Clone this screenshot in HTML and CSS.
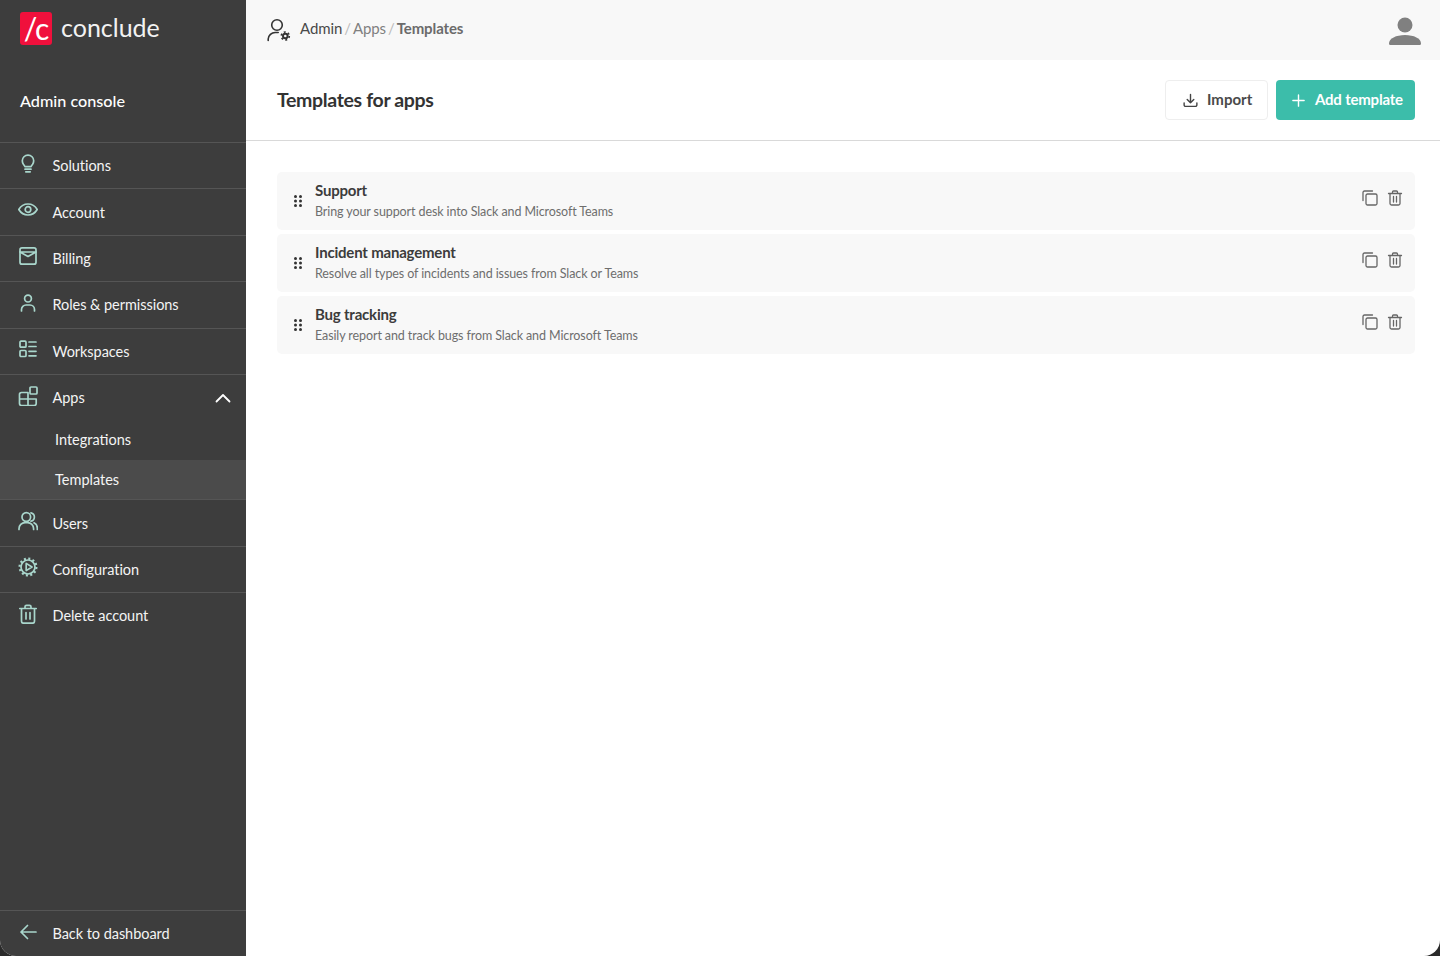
FILE: index.html
```html
<!DOCTYPE html>
<html>
<head>
    <title>Templates for apps</title>
    <link rel="stylesheet" href="styles.css">
</head>
<body>
    <div class="app">
        <aside class="sidebar">
            <div class="brand">
                <div class="logo">/c</div>
                <span class="brand-name">conclude</span>
            </div>
            <div class="console-title">Admin console</div>
            <nav class="nav">
                <a class="nav-item">
                    <svg class="nav-icon" viewBox="0 0 20 20"><path d="M6.900 12.600c-.3-1-.8-1.600-1.500-2.400A5.600 5.600 0 0 1 4.300 6.800 5.700 5.700 0 0 1 15.700 6.800c0 1.300-.4 2.400-1.100 3.400-.7.8-1.200 1.400-1.500 2.400zM7 15.200h6M7.800 17.800h4.400"/></svg>
                    <span>Solutions</span>
                </a>
                <a class="nav-item">
                    <svg class="nav-icon" viewBox="0 0 20 20"><path d="M.8 9.500C3 5.800 6.200 4 10 4s7 1.800 9.200 5.500C17 13.200 13.800 15 10 15S3 13.200.8 9.500z"/><circle cx="10" cy="9.500" r="2.800"/></svg>
                    <span>Account</span>
                </a>
                <a class="nav-item">
                    <svg class="nav-icon" viewBox="0 0 20 20"><rect x="2" y="1.800" width="16" height="16.400" rx="2"/><path d="M2 6h16M2 6l8 4.500L18 6"/></svg>
                    <span>Billing</span>
                </a>
                <a class="nav-item">
                    <svg class="nav-icon" viewBox="0 0 20 20"><circle cx="10" cy="5.600" r="3.400"/><path d="M3.500 18v-1.500a4.500 4.500 0 0 1 4.500-4.500h4a4.500 4.500 0 0 1 4.500 4.500V18"/></svg>
                    <span>Roles &amp; permissions</span>
                </a>
                <a class="nav-item">
                    <svg class="nav-icon" viewBox="0 0 20 20"><rect x="2" y="2.200" width="6" height="6" rx="1"/><rect x="2" y="11.500" width="6" height="6" rx="1"/><path d="M11 3h7M11 7.500h7M11 12.300h7M11 16.800h7"/></svg>
                    <span>Workspaces</span>
                </a>
                <a class="nav-item nav-open">
                    <svg class="nav-icon" viewBox="0 0 20 20"><path d="M1.500 8.500a2 2 0 0 1 2-2H10v13H3.500a2 2 0 0 1-2-2zM1.500 13H18M10 13h8.200v4.500a2 2 0 0 1-2 2H10"/><rect x="12" y="1" width="7" height="7" rx="1"/></svg>
                    <span>Apps</span>
                    <svg class="chevron" viewBox="0 0 16 10"><path d="M1.500 8.500L8 2l6.500 6.500"/></svg>
                </a>
                <div class="subnav">
                    <a class="sub-item">Integrations</a>
                    <a class="sub-item sub-active">Templates</a>
                </div>
                <a class="nav-item">
                    <svg class="nav-icon" viewBox="0 0 20 20"><circle cx="8.300" cy="6" r="4.300"/><path d="M1 18.500v-.8a6 6 0 0 1 6-6h2.600a6 6 0 0 1 6 6v.8M13 1.800a4.300 4.300 0 0 1 0 8.400M16 11.800a6 6 0 0 1 3.300 5.800v.9"/></svg>
                    <span>Users</span>
                </a>
                <a class="nav-item">
                    <svg class="nav-icon" viewBox="0 0 20 20"><circle cx="10" cy="10" r="7"/><path d="M8.200 6.400L14 10l-5.800 3.600z"/><circle class="gear-teeth" cx="10" cy="10" r="8.400"/></svg>
                    <span>Configuration</span>
                </a>
                <a class="nav-item">
                    <svg class="nav-icon" viewBox="0 0 20 20"><path d="M1.800 4.500h16.400M7 4.500V2.800a1.500 1.500 0 0 1 1.500-1.500h3A1.500 1.500 0 0 1 13 2.800v1.700M3.500 4.500v12.700a2 2 0 0 0 2 2h9a2 2 0 0 0 2-2V4.500M8 8.500v6.500M12 8.500v6.500"/></svg>
                    <span>Delete account</span>
                </a>
            </nav>
            <a class="nav-item back-link">
                <svg class="nav-icon" viewBox="0 0 20 20"><path d="M18 10H3M9.500 3.500L3 10l6.500 6.500"/></svg>
                <span>Back to dashboard</span>
            </a>
        </aside>

        <main class="main">
            <header class="topbar">
                <svg class="admin-icon" viewBox="0 0 24 24"><circle cx="10" cy="7" r="5.300"/><path d="M1.200 22.500v-1.500a7 7 0 0 1 7-6.500h3"/><circle cx="18.300" cy="18" r="2.300" class="gear"/><circle cx="18.300" cy="18" r="4" class="gear-teeth"/></svg>
                <div class="crumbs">
                    <span class="crumb-first">Admin</span>
                    <span class="crumb-sep">/</span>
                    <span class="crumb-mid">Apps</span>
                    <span class="crumb-sep">/</span>
                    <span class="crumb-last">Templates</span>
                </div>
                <svg class="avatar" viewBox="0 0 32 30"><circle cx="16" cy="9" r="7.500"/><path d="M0 27.500c0-5 7-8.500 16-8.500s16 3.500 16 8.500c0 1-.8 1.500-1.500 1.500H1.500C.8 29 0 28.500 0 27.500z"/></svg>
            </header>

            <div class="page-head">
                <h1>Templates for apps</h1>
                <div class="actions">
                    <button class="btn btn-light">
                        <svg class="btn-icon" viewBox="0 0 16 16"><path d="M8 1.500v9M4.500 7L8 10.500 11.500 7M1.200 10.500v2.300a1.500 1.500 0 0 0 1.500 1.500h10.600a1.500 1.500 0 0 0 1.500-1.500v-2.300"/></svg>
                        Import
                    </button>
                    <button class="btn btn-primary">
                        <svg class="btn-icon" viewBox="0 0 16 16"><path d="M8 2v12M2 8h12"/></svg>
                        Add template
                    </button>
                </div>
            </div>

            <section class="template-list">
                <div class="template-row">
                    <svg class="grip" viewBox="0 0 8 12"><circle cx="1.500" cy="1.500" r="1.500"/><circle cx="6.500" cy="1.500" r="1.500"/><circle cx="1.500" cy="6" r="1.500"/><circle cx="6.500" cy="6" r="1.500"/><circle cx="1.500" cy="10.500" r="1.500"/><circle cx="6.500" cy="10.500" r="1.500"/></svg>
                    <div class="template-text">
                        <div class="template-name">Support</div>
                        <div class="template-desc">Bring your support desk into Slack and Microsoft Teams</div>
                    </div>
                    <div class="row-icons">
                        <svg viewBox="0 0 16 16"><path d="M1 10.500V2.500A1.500 1.500 0 0 1 2.500 1h8"/><rect x="4" y="4" width="11" height="11" rx="1.500"/></svg>
                        <svg viewBox="0 0 16 16"><path d="M1.500 3.500h13M5.500 3.500V2a1 1 0 0 1 1-1h3a1 1 0 0 1 1 1v1.500M3 3.500v10a1.500 1.500 0 0 0 1.500 1.500h7a1.500 1.500 0 0 0 1.500-1.500v-10M6.500 6.500v5.500M9.500 6.500v5.500"/></svg>
                    </div>
                </div>
                <div class="template-row">
                    <svg class="grip" viewBox="0 0 8 12"><circle cx="1.500" cy="1.500" r="1.500"/><circle cx="6.500" cy="1.500" r="1.500"/><circle cx="1.500" cy="6" r="1.500"/><circle cx="6.500" cy="6" r="1.500"/><circle cx="1.500" cy="10.500" r="1.500"/><circle cx="6.500" cy="10.500" r="1.500"/></svg>
                    <div class="template-text">
                        <div class="template-name">Incident management</div>
                        <div class="template-desc">Resolve all types of incidents and issues from Slack or Teams</div>
                    </div>
                    <div class="row-icons">
                        <svg viewBox="0 0 16 16"><path d="M1 10.500V2.500A1.500 1.500 0 0 1 2.500 1h8"/><rect x="4" y="4" width="11" height="11" rx="1.500"/></svg>
                        <svg viewBox="0 0 16 16"><path d="M1.500 3.500h13M5.500 3.500V2a1 1 0 0 1 1-1h3a1 1 0 0 1 1 1v1.500M3 3.500v10a1.500 1.500 0 0 0 1.500 1.500h7a1.500 1.500 0 0 0 1.500-1.500v-10M6.500 6.500v5.500M9.500 6.500v5.500"/></svg>
                    </div>
                </div>
                <div class="template-row">
                    <svg class="grip" viewBox="0 0 8 12"><circle cx="1.500" cy="1.500" r="1.500"/><circle cx="6.500" cy="1.500" r="1.500"/><circle cx="1.500" cy="6" r="1.500"/><circle cx="6.500" cy="6" r="1.500"/><circle cx="1.500" cy="10.500" r="1.500"/><circle cx="6.500" cy="10.500" r="1.500"/></svg>
                    <div class="template-text">
                        <div class="template-name">Bug tracking</div>
                        <div class="template-desc">Easily report and track bugs from Slack and Microsoft Teams</div>
                    </div>
                    <div class="row-icons">
                        <svg viewBox="0 0 16 16"><path d="M1 10.500V2.500A1.500 1.500 0 0 1 2.500 1h8"/><rect x="4" y="4" width="11" height="11" rx="1.500"/></svg>
                        <svg viewBox="0 0 16 16"><path d="M1.500 3.500h13M5.500 3.500V2a1 1 0 0 1 1-1h3a1 1 0 0 1 1 1v1.500M3 3.500v10a1.500 1.500 0 0 0 1.500 1.500h7a1.500 1.500 0 0 0 1.500-1.500v-10M6.500 6.500v5.500M9.500 6.500v5.500"/></svg>
                    </div>
                </div>
            </section>
        </main>
    </div>
</body>
</html>
```

FILE: styles.css
```css
html, body { margin: 0; padding: 0; height: 100%; background: #2a2a2a; }
body { font-family: Lato, "Liberation Sans", sans-serif; font-size: 15px; color: #333; overflow: hidden; }
svg { fill: none; stroke-linecap: round; stroke-linejoin: round; }

.app { display: flex; height: 956px; background: #fff; border-radius: 0 0 16px 16px; overflow: hidden; }

/* sidebar */
.sidebar { width: 246px; flex: none; background: #3d3d3d; color: #fff; display: flex; flex-direction: column; }
.brand { display: flex; align-items: center; gap: 9px; height: 57px; padding-left: 20px; }
.logo { width: 32px; height: 33px; border-radius: 3px; background: #f0103c; color: #fff; font-size: 30px; line-height: 32px; text-align: center; letter-spacing: -1px; }
.brand-name { font-size: 25px; line-height: 30px; margin-bottom: 3px; color: #f2f2f2; }
.console-title { height: 85px; box-sizing: border-box; padding: 33px 0 0 20px; font-size: 16.200px; line-height: 22px; font-weight: 500; }
.nav { flex: 1; }
.nav-item { display: flex; align-items: center; height: 46.400px; box-sizing: border-box; padding-left: 18px; border-top: 1.500px solid #555; font-size: 14.500px; letter-spacing: -0.05px; color: #f4f4f4; }
.nav-item span { margin-left: 14.500px; }
.nav-icon { width: 20px; height: 20px; flex: none; stroke: #a9d6cc; stroke-width: 1.700; margin-top: -4px; }
.gear-teeth { stroke-dasharray: 2 2.400; stroke-width: 2.200; stroke-linecap: butt; }
.nav-open { position: relative; }
.chevron { width: 16px; height: 10px; margin-left: auto; margin-right: 15px; stroke: #fff; stroke-width: 1.800; }
.sub-item { display: block; height: 39.500px; line-height: 40px; padding-left: 55px; font-size: 14.500px; color: #f4f4f4; }
.sub-active { background: #4b4b4b; line-height: 39px; }
.back-link { height: 46px; }

/* main */
.main { flex: 1; display: flex; flex-direction: column; min-width: 0; }
.topbar { display: flex; align-items: center; height: 60px; flex: none; background: #f8f8f8; padding: 0 19px 0 21px; }
.admin-icon { width: 24px; height: 24px; stroke: #333; stroke-width: 1.600; }
.admin-icon .gear { stroke-width: 2; }
.admin-icon .gear-teeth { stroke-width: 1.600; stroke-dasharray: 2 2.200; }
.crumbs { display: flex; gap: 2px; margin-left: 9px; margin-bottom: 4px; font-size: 15px; letter-spacing: -0.1px; }
.crumb-first { color: #4a4a4a; }
.crumb-sep { color: #bbb; }
.crumb-mid { color: #808080; }
.crumb-last { color: #6b6b6b; font-weight: 700; }
.avatar { width: 32px; height: 30px; margin-left: auto; margin-top: 2px; fill: #808080; }

.page-head { display: flex; align-items: center; justify-content: space-between; height: 81px; flex: none; box-sizing: border-box; border-bottom: 1px solid #d9d9d9; padding: 0 25px 0 31px; }
.page-head h1 { margin: 0 0 2px; font-size: 19.500px; letter-spacing: -0.35px; font-weight: 700; color: #333; }
.actions { display: flex; gap: 8px; }
.btn { display: flex; align-items: center; height: 40px; box-sizing: border-box; border-radius: 4px; font-family: inherit; font-size: 15px; font-weight: 700; padding-bottom: 4px; }
.btn-icon { width: 15px; height: 15px; stroke-width: 1.500; margin-right: 9px; }
.btn-light { width: 103px; padding-left: 17px; background: #fff; border: 1px solid #eee; color: #4a4a4a; }
.btn-light .btn-icon { stroke: #444; margin-top: 4px; }
.btn-primary { width: 139px; padding-left: 15px; background: #3cbdaa; border: none; color: #fff; letter-spacing: -0.2px; }
.btn-primary .btn-icon { stroke: #fff; margin-top: 4px; }

.template-list { display: flex; flex-direction: column; gap: 4px; padding: 31px 25px 0 31px; }
.template-row { display: flex; align-items: center; height: 58px; background: #f8f8f8; border-radius: 5px; padding: 0 12px 0 17px; }
.grip { width: 8px; height: 12px; flex: none; fill: #333; }
.template-text { flex: 1; margin-left: 13px; }
.template-name { font-size: 15px; letter-spacing: -0.2px; line-height: 20px; font-weight: 700; color: #3c3c3c; margin-top: -1px; }
.template-desc { font-size: 12.500px; letter-spacing: -0.1px; line-height: 20px; color: #6e6e6e; margin-top: 2px; }
.row-icons { display: flex; gap: 9px; margin-top: -7px; }
.row-icons svg { width: 16px; height: 16px; stroke: #666; stroke-width: 1.300; }
```
